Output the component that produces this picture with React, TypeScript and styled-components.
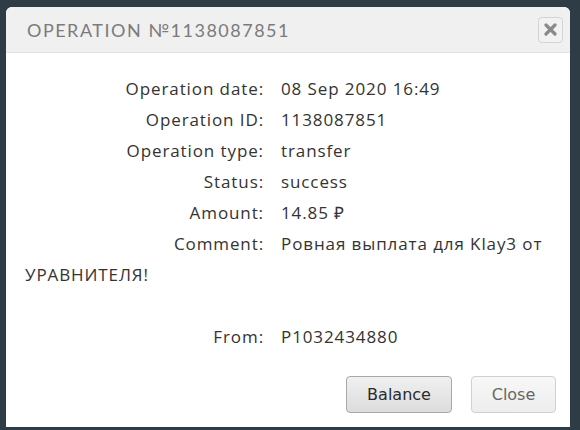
import React from 'react';
import styled, { createGlobalStyle } from 'styled-components';

const GlobalStyle = createGlobalStyle`
    html, body {
        margin: 0;
        padding: 0;
        background: #2e3d45;
    }
`;

const rows = [
    { label: 'Operation date:', value: '08 Sep 2020 16:49' },
    { label: 'Operation ID:', value: '1138087851' },
    { label: 'Operation type:', value: 'transfer' },
    { label: 'Status:', value: 'success' },
    { label: 'Amount:', value: '14.85 ₽' },
    { label: 'Comment:', value: 'Ровная выплата для Klay3 от УРАВНИТЕЛЯ!' },
];

export default function App() {
    return (
        <>
            <GlobalStyle />
            <Page>
                <Modal>
                    <Header>
                        <Title>OPERATION №1138087851</Title>
                        <CloseIcon>
                            <svg width="13" height="13" viewBox="0 0 13 13">
                                <path
                                    d="M2 2 L11 11 M11 2 L2 11"
                                    stroke="#8a8a8a"
                                    strokeWidth="3.2"
                                    strokeLinecap="round"
                                />
                            </svg>
                        </CloseIcon>
                    </Header>
                    <Body>
                        {rows.map((r) => (
                            <Row key={r.label}>
                                <Label>{r.label}</Label>
                                {r.value}
                            </Row>
                        ))}
                        <Row>&nbsp;</Row>
                        <Row>
                            <Label>From:</Label>
                            P1032434880
                        </Row>
                    </Body>
                    <Footer>
                        <Button primary>Balance</Button>
                        <Button>Close</Button>
                    </Footer>
                </Modal>
            </Page>
        </>
    );
}

const Page = styled.div`
    width: 580px;
    height: 430px;
    padding: 7px 10px 0 6px;
    box-sizing: border-box;
    overflow: hidden;
`;

const Modal = styled.div`
    background: #fff;
    border-radius: 6px 6px 0 0;
    height: 420px;
    display: flex;
    flex-direction: column;
    overflow: hidden;
`;

const Header = styled.div`
    display: flex;
    align-items: center;
    justify-content: space-between;
    height: 45px;
    padding: 0 7px 0 21px;
    background: #f0f0f0;
    border-bottom: 1px solid #e2e2e2;
`;

const Title = styled.div`
    font-family: 'Lato', 'DejaVu Sans', sans-serif;
    font-size: 18px;
    letter-spacing: 1.5px;
    color: #7b7b7b;
`;

const CloseIcon = styled.div`
    width: 23px;
    height: 24px;
    border: 1px solid #d4d4d4;
    border-radius: 4px;
    background: #f2f2f2;
    display: flex;
    align-items: center;
    justify-content: center;
`;

const Body = styled.div`
    flex: 1;
    padding: 20px 20px 0 19px;
`;

const Row = styled.div`
    font-family: 'Open Sans', sans-serif;
    font-size: 17px;
    letter-spacing: 0.9px;
    line-height: 31px;
    color: #333;
`;

const Label = styled.span`
    display: inline-block;
    width: 239px;
    margin-right: 17px;
    text-align: right;
`;

const Footer = styled.div`
    display: flex;
    justify-content: flex-end;
    gap: 19px;
    padding: 0 14px 14px 0;
`;

const Button = styled.button<{ primary?: boolean }>`
    height: 37px;
    padding: 0 18px;
    border-radius: 4px;
    font-family: 'DejaVu Sans', sans-serif;
    font-size: 16px;
    color: ${(p) => (p.primary ? '#2b2b2b' : '#666')};
    border: 1px solid ${(p) => (p.primary ? '#a8a8a8' : '#d0d0d0')};
    background: ${(p) =>
        p.primary
            ? 'linear-gradient(#f0f0f0, #dcdcdc)'
            : 'linear-gradient(#f8f8f8, #ededed)'};
    min-width: ${(p) => (p.primary ? '106px' : '85px')};
`;
